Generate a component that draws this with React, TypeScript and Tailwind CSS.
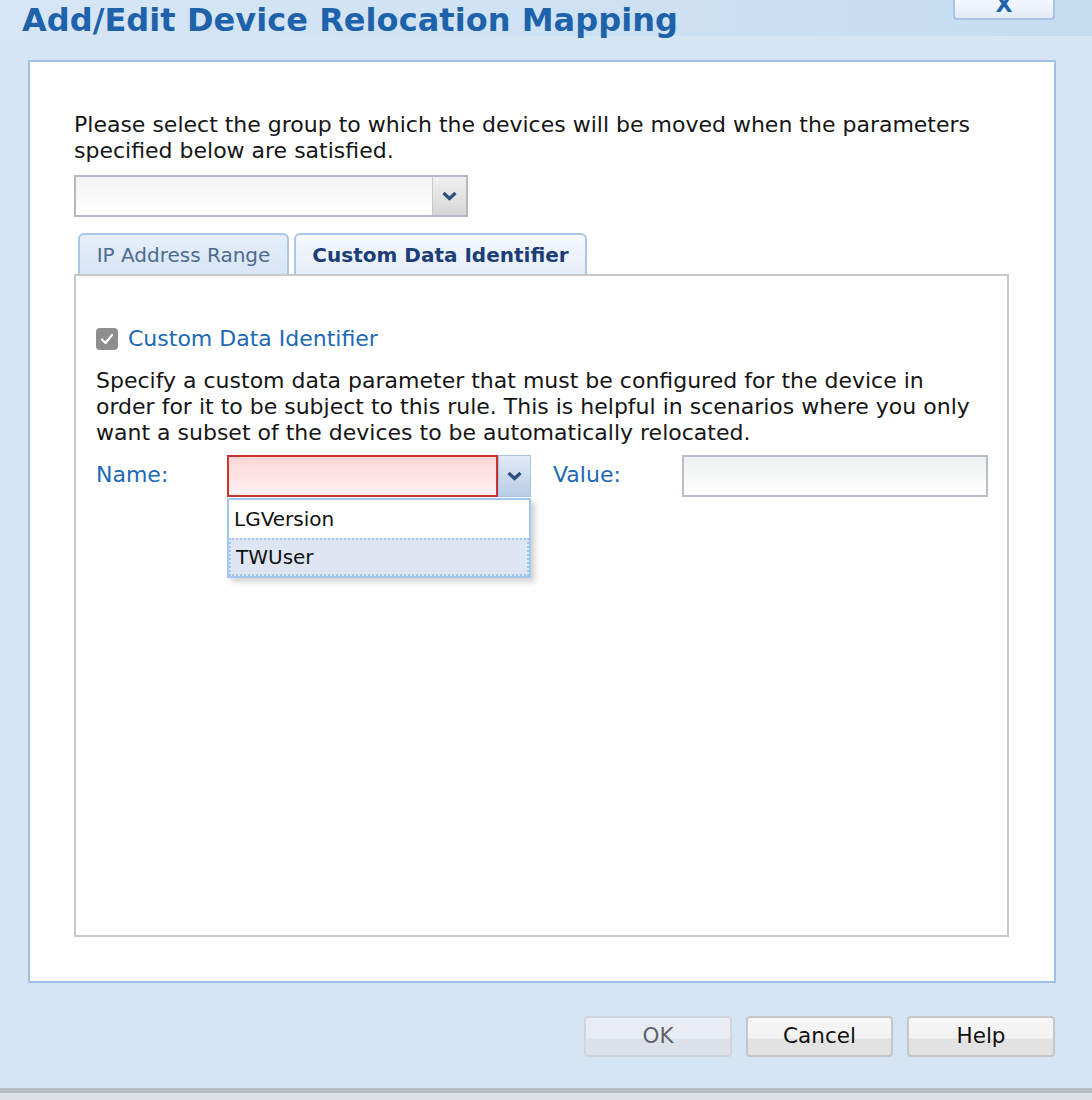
import React from 'react';

const Chevron: React.FC = () => (
  <svg width="15" height="10" viewBox="0 0 15 10">
    <path d="M1.5 2 L7.5 7.5 L13.5 2" fill="none" stroke="#2d4f7c" strokeWidth="3.2" strokeLinejoin="miter" />
  </svg>
);

const App: React.FC = () => {
  return (
    <div className="w-[1092px] h-[1100px] bg-[#d5e5f4] flex flex-col overflow-hidden font-['DejaVu_Sans',sans-serif] text-[#111]">
      {/* header */}
      <div className="h-[36px] flex items-start justify-between bg-gradient-to-r from-[#d7e6f4] via-[#cfe2f3] to-[#c4dbf0]">
        <h1 className="pl-[22px] pt-[1px] text-[32px] leading-[38px] font-bold text-[#1d62aa] tracking-[0.05px] whitespace-nowrap">
          Add/Edit Device Relocation Mapping
        </h1>
        <div className="mr-[37px] -mt-[14px] w-[102px] h-[34px] rounded-[4px] border-2 border-[#a9c3e0] bg-gradient-to-b from-[#ffffff] to-[#e2ecf7] flex items-end justify-center pb-[1px]">
          <span className="text-[22px] leading-[24px] font-bold text-[#1d62aa]">X</span>
        </div>
      </div>

      {/* main panel */}
      <div className="mt-[24px] ml-[28px] w-[1028px] h-[923px] border-2 border-[#9fc1e7] bg-white pl-[44px] pt-[50px] flex flex-col">
        <p className="w-[920px] text-[22px] leading-[26px] text-[#151515]">
          Please select the group to which the devices will be moved when the parameters specified below are satisfied.
        </p>

        <div className="mt-[11px] w-[394px] h-[42px] flex border-2 border-[#b3b8c4] bg-white">
          <div className="flex-1 bg-gradient-to-b from-[#f3f3f3] to-white" />
          <div className="w-[34px] border-l border-[#c6c9cf] bg-gradient-to-b from-[#f0f0f0] to-[#d6d6d6] flex items-center justify-center">
            <Chevron />
          </div>
        </div>

        {/* tabs */}
        <div className="mt-[16px] h-[41px] flex items-end gap-[5px] pl-[4px]">
          <div className="w-[211px] h-[41px] rounded-t-[6px] border-2 border-b-0 border-[#abc7e8] bg-gradient-to-b from-[#e6eefa] to-[#d8e5f5] flex items-center justify-center">
            <span className="text-[20px] text-[#4d6c92]">IP Address Range</span>
          </div>
          <div className="w-[293px] h-[41px] rounded-t-[6px] border-2 border-b-0 border-[#abc7e8] bg-gradient-to-b from-[#f6f9fd] to-[#e4edf9] flex items-center justify-center">
            <span className="text-[20px] font-bold text-[#1b3d78]">Custom Data Identifier</span>
          </div>
        </div>

        <div className="w-[935px] h-[663px] border-2 border-[#c9c9c9] pl-[20px] pt-[50px] flex flex-col">
          <div className="flex items-center gap-[10px] h-[26px]">
            <div className="w-[22px] h-[22px] rounded-[4px] bg-[#8e8e8e] flex items-center justify-center">
              <svg width="14" height="12" viewBox="0 0 14 12">
                <path d="M2 6.5 L5.5 10 L12 2" fill="none" stroke="white" strokeWidth="2.2" strokeLinecap="round" strokeLinejoin="round" />
              </svg>
            </div>
            <span className="text-[22px] leading-[26px] text-[#1c69b4]">Custom Data Identifier</span>
          </div>

          <p className="mt-[16px] w-[893px] text-[22px] leading-[26px] text-[#151515]">
            Specify a custom data parameter that must be configured for the device in order for it to be subject to this rule. This is helpful in scenarios where you only want a subset of the devices to be automatically relocated.
          </p>

          <div className="mt-[9px] flex items-center h-[42px]">
            <span className="w-[131px] text-[22px] leading-[26px] -mt-[3px] text-[#1c69b4]">Name:</span>
            <div className="relative w-[304px] h-[42px] flex">
              <div className="flex-1 border-2 border-[#c8352f] bg-gradient-to-b from-[#fdd7d7] to-[#fff1f1]" />
              <div className="w-[33px] border border-[#a7c3e4] bg-gradient-to-b from-[#e1ebf7] to-[#b8cde7] flex items-center justify-center">
                <Chevron />
              </div>
              {/* open list */}
              <div className="absolute left-0 top-[43px] w-[304px] h-[80px] border-2 border-[#a3c6ee] bg-white shadow-[4px_4px_6px_rgba(0,0,0,0.18)] flex flex-col">
                <div className="h-[38px] flex items-center pl-[5px] text-[20px] text-[#111]">LGVersion</div>
                <div className="flex-1 flex items-center pl-[5px] text-[20px] text-[#111] bg-[#dfe6f3] border-2 border-dotted border-[#a3c6ee]">TWUser</div>
              </div>
            </div>
            <span className="ml-[22px] w-[129px] text-[22px] leading-[26px] -mt-[3px] text-[#1c69b4]">Value:</span>
            <div className="w-[306px] h-[42px] border-2 border-[#b8bdcc] bg-gradient-to-b from-[#eef0f0] to-white" />
          </div>
        </div>
      </div>

      {/* buttons */}
      <div className="mt-[33px] pr-[37px] flex justify-end gap-[14px]">
        <button className="w-[148px] h-[41px] rounded-[4px] border-2 border-[#cfd5dd] bg-[linear-gradient(#eaeef4_0%,#e9edf3_55%,#dde2ea_56%,#dde2ea_100%)] text-[21.5px] text-[#5f636a]">OK</button>
        <button className="w-[147px] h-[41px] rounded-[4px] border-2 border-[#c4c6c9] bg-[linear-gradient(#f6f6f6_0%,#f2f2f2_55%,#e2e2e2_56%,#e2e2e2_100%)] text-[21.5px] text-[#111]">Cancel</button>
        <button className="w-[148px] h-[41px] rounded-[4px] border-2 border-[#c4c6c9] bg-[linear-gradient(#f6f6f6_0%,#f2f2f2_55%,#e2e2e2_56%,#e2e2e2_100%)] text-[21.5px] text-[#111]">Help</button>
      </div>

      {/* bottom strip */}
      <div className="mt-[31px] flex-1 border-t-[5px] border-[#b7bcc3] bg-[#dde1e6]" />
    </div>
  );
};

export default App;
